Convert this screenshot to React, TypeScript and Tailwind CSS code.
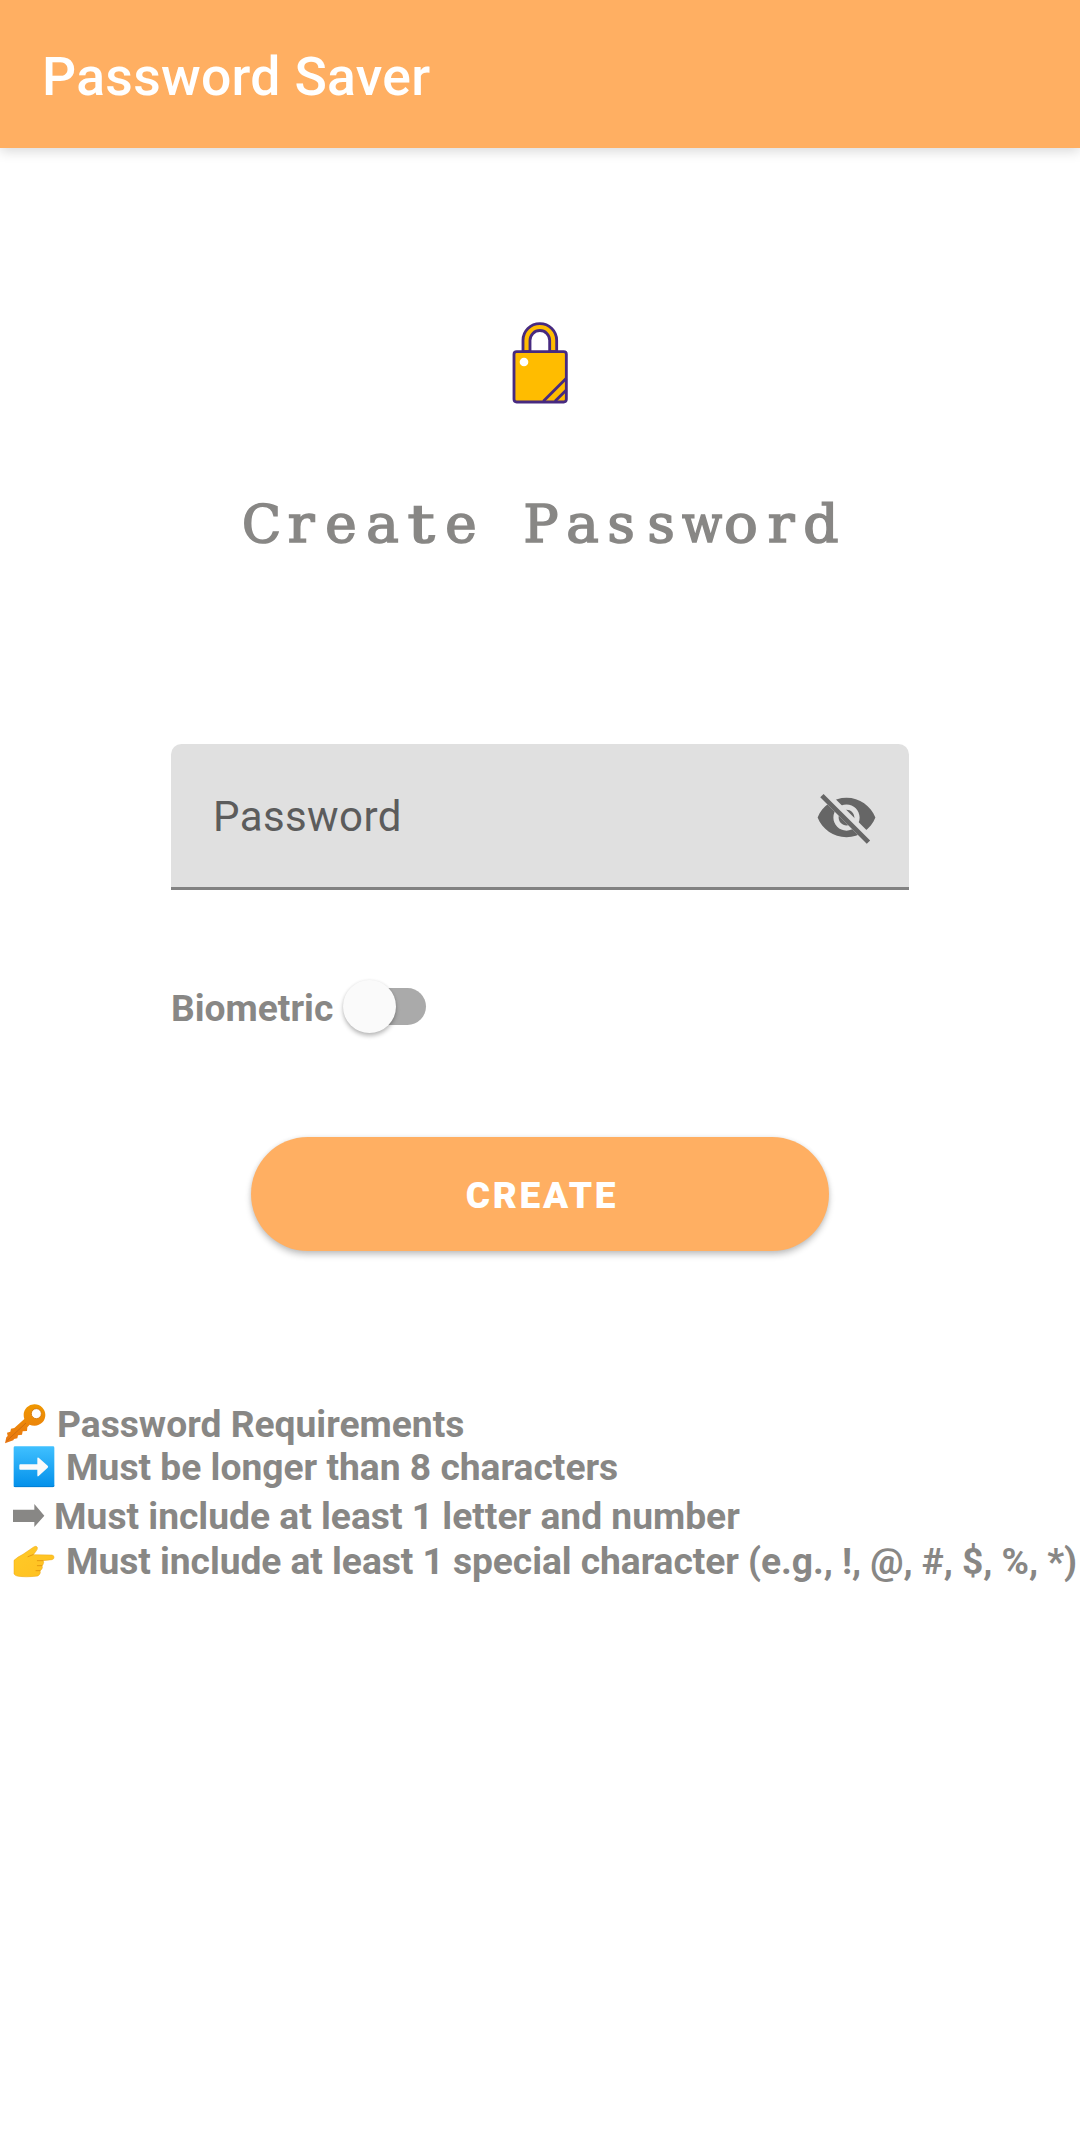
import type { ReactNode } from "react";

const HEADING: { ch: string; sx?: string }[] = [
  { ch: "C", sx: "pl-[1px] scale-x-[0.98]" },
  { ch: "r", sx: "scale-x-[1.07]" },
  { ch: "e", sx: "scale-x-[1.02]" },
  { ch: "a", sx: "pl-[3px] scale-x-[1.05]" },
  { ch: "t", sx: "scale-x-[1.3]" },
  { ch: "e", sx: "scale-x-[1.02]" },
  { ch: " " },
  { ch: "P" },
  { ch: "a", sx: "pl-[3px] scale-x-[1.05]" },
  { ch: "s", sx: "scale-x-[1.02]" },
  { ch: "s", sx: "scale-x-[1.02]" },
  { ch: "w", sx: "pl-[2px] scale-x-[0.9]" },
  { ch: "o", sx: "scale-x-[1.08]" },
  { ch: "r", sx: "scale-x-[1.07]" },
  { ch: "d", sx: "scale-x-[1.06]" },
];

function LockIcon() {
  return (
    <svg width="100" height="105" viewBox="0 0 300 315" stroke="#472a80" strokeWidth="8.500" strokeLinejoin="round">
      <path d="M99 125V91a50.500 50 0 0 1 101 0v34h-21V91a29 29 0 0 0-59 0v34z" fill="#ffbc00" />
      <rect x="72" y="125" width="157" height="151" rx="8" fill="#ffbc00" />
      <path d="M160 274 229 205M195 274 229 240" fill="none" />
      <circle cx="102" cy="156" r="13" fill="#fff" stroke="none" />
    </svg>
  );
}

function VisibilityOffIcon() {
  return (
    <svg width="63" height="63" viewBox="0 0 24 24">
      <path
        fill="#666"
        d="M12,4.5C7,4.5 2.73,7.61 1,12c1.73,4.39 6,7.5 11,7.5s9.27,-3.11 11,-7.5c-1.73,-4.39 -6,-7.5 -11,-7.5zM12,17c-2.76,0 -5,-2.24 -5,-5s2.24,-5 5,-5 5,2.24 5,5 -2.24,5 -5,5zM12,9c-1.66,0 -3,1.34 -3,3s1.34,3 3,3 3,-1.34 3,-3 -1.34,-3 -3,-3z"
      />
      <path d="M2 4.27 4.54 1.73 22.27 19.46 19.73 22z" fill="#e0e0e0" />
      <path d="M2 4.27 3.27 3 21 20.73 19.73 22z" fill="#666" />
    </svg>
  );
}

function KeyIcon() {
  return (
    <svg width="42" height="42" viewBox="12 40 126 126">
      <defs>
        <linearGradient id="key" x1="0" y1="0" x2="0" y2="1">
          <stop offset="0" stopColor="#ef9700" />
          <stop offset="1" stopColor="#e97512" />
        </linearGradient>
      </defs>
      <path
        fill="url(#key)"
        fillRule="evenodd"
        d="M104 44a32 32 0 0 1 0 64q-9 0-15-3l-7 8-1 11-13 1-2 10-12 2-2 9-10 2-2 4-25 9 4-18 4-4-2-10 10-3 2-9 10-2 30-27q-2-6-2-12a32 32 0 0 1 33-32zM109 57a15 15 0 1 0 0 30 15 15 0 0 0 0-30z"
      />
      <path d="M19 155 78 100" stroke="#c96a11" strokeWidth="2.500" />
      <circle cx="109" cy="72" r="15" fill="none" stroke="#cf7407" strokeWidth="2.500" />
    </svg>
  );
}

function BlueArrowIcon() {
  return (
    <svg width="42" height="42" viewBox="40 170 126 126">
      <defs>
        <linearGradient id="blue" x1="0" y1="0" x2="0" y2="1">
          <stop offset="0" stopColor="#40c0ff" />
          <stop offset="1" stopColor="#0390ea" />
        </linearGradient>
      </defs>
      <rect x="42" y="171" width="122" height="122" rx="4" fill="url(#blue)" />
      <path d="M43 290q0 2 3 2h114q3 0 3-3" fill="none" stroke="#0379cd" strokeWidth="2.500" />
      <path d="M62 225h51v-18q0-4 4-2l27 24q3 3 0 6l-27 25q-4 3-4-2v-17H62q-3 0-3-3v-10q0-3 3-3z" fill="#fafafa" />
    </svg>
  );
}

function PlainArrowIcon() {
  return (
    <svg width="32" height="24" viewBox="38 347 96 72">
      <path d="M38 364h64v-17l30 35-30 34v-15H38z" fill="#888785" />
    </svg>
  );
}

function HandIcon() {
  return (
    <svg width="42" height="33" viewBox="40 465 126 99">
      <defs>
        <linearGradient id="hand" x1="0" y1="0" x2="1" y2="1">
          <stop offset="0" stopColor="#ffca28" />
          <stop offset="1" stopColor="#ffc020" />
        </linearGradient>
      </defs>
      <path
        fill="url(#hand)"
        stroke="#eda613"
        strokeWidth="1.500"
        d="M43 511q10-10 27-18l32-22q8-5 11 1 2 6-5 13l-7 9 56 1q6 1 6 7t-6 7l-27 3q4 4 1 9-1 4-4 6 3 6-1 11-2 3-5 4 3 7-2 12-3 5-11 5-31 3-52 0-9-1-13-7z"
      />
      <path d="m85 500 15-6M130 512h-17M127 527h-14M121 542h-12" fill="none" stroke="#e59a10" strokeWidth="3" strokeLinecap="round" />
    </svg>
  );
}

function Requirement({ row, icon, children }: { row: string; icon: ReactNode; children: ReactNode }) {
  return (
    <li className={`flex h-[42px] items-center whitespace-pre ${row}`}>
      {icon}
      <span>{children}</span>
    </li>
  );
}

export default function App() {
  return (
    <div className="flex h-[2137px] w-[1080px] flex-col overflow-hidden bg-white font-['Roboto',sans-serif]">
      <header className="flex h-[148px] shrink-0 items-center bg-[#ffaf62] pl-[42px] pt-[6px] shadow-[0_3px_12px_rgba(0,0,0,0.16)]">
        <h1 className="text-[53.5px] font-medium leading-[62px] tracking-[0.3px] text-white">Password Saver</h1>
      </header>

      <main className="flex flex-col items-center">
        <div className="mt-[162px] h-[105px] w-[100px]">
          <LockIcon />
        </div>

        <h2 className="mt-[67px] flex h-[84px] whitespace-pre pl-[2px] font-['DejaVu_Serif',serif] text-[52px] leading-[84px] text-[#888785] [-webkit-text-stroke:1.7px_#888785]">
          {HEADING.map(({ ch, sx }, i) => (
            <span key={i} className={`flex w-[40px] justify-center ${sx ?? ""}`}>
              {ch}
            </span>
          ))}
        </h2>

        <div className="mt-[178px] flex h-[146px] w-[738px] items-center justify-between rounded-t-[10.5px] border-b-[3px] border-[#828282] bg-[#e0e0e0] pl-[42px] pr-[31px] pt-[4px]">
          <span className="pb-[2px] text-[42px] leading-[50px] tracking-[0.4px] text-[#5c5c5c]">Password</span>
          <VisibilityOffIcon />
        </div>

        <div className="mt-[80px] flex h-[72px] w-[738px] items-center">
          <span className="pt-[3px] text-[37.2px] font-bold leading-[44px] text-[#888785]">Biometric</span>
          <div className="ml-[14px] flex h-[37px] w-[79px] items-center rounded-full bg-[linear-gradient(90deg,transparent_40%,#aaa_40%)]">
            <div className="-ml-[4px] size-[53px] shrink-0 rounded-full bg-[#fafafa] shadow-[0_3px_4px_rgba(0,0,0,0.25),0_0_3px_rgba(0,0,0,0.08)]" />
          </div>
        </div>

        <button className="mt-[95px] flex h-[114px] w-[578px] items-center justify-center rounded-full bg-[#ffaf62] pl-[4px] pt-[3px] text-[37px] font-black tracking-[2.7px] text-white shadow-[0_4px_6px_rgba(0,0,0,0.22),0_0_4px_rgba(0,0,0,0.08)]">
          CREATE
        </button>
      </main>

      <ul className="mt-[149px] flex flex-col text-[37.2px] font-bold leading-[44px] text-[#888785]">
        <Requirement row="mt-[3px] gap-[11px] pl-[4px]" icon={<KeyIcon />}>Password Requirements</Requirement>
        <Requirement row="mt-[1px] gap-[11px] pl-[13px]" icon={<BlueArrowIcon />}>Must be longer than 8 characters</Requirement>
        <Requirement row="mt-[7px] gap-[9px] pl-[13px]" icon={<PlainArrowIcon />}>Must include at least 1 letter and number</Requirement>
        <Requirement row="mt-[3px] gap-[11px] pl-[13px] tracking-[-0.06px]" icon={<HandIcon />}>Must include at least 1 special character (e.g., !, @, #, $, %, *)</Requirement>
      </ul>
    </div>
  );
}
